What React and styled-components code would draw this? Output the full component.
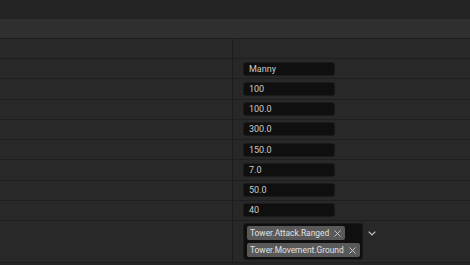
import React from "react";
import styled, { createGlobalStyle } from "styled-components";

const GlobalStyle = createGlobalStyle`
  html, body {
    margin: 0;
    padding: 0;
    background: #242424;
    font-family: Roboto, "Liberation Sans", Arial, sans-serif;
  }
`;

const Page = styled.div`
  width: 470px;
  height: 265px;
  overflow: hidden;
  background: #242424;
`;

const TopBar = styled.div`
  height: 19px;
  background: #242424;
`;

const Band = styled.div`
  height: 19px;
  background: #2f2f2f;
  border-bottom: 1px solid #1f1f1f;
`;

const Row = styled.div`
  display: grid;
  grid-template-columns: 232px 1px 1fr;
  box-sizing: border-box;
  height: ${(p) => p.$h}px;
  background: #282828;
  border-bottom: 1px solid #1e1e1e;
`;

const Divider = styled.div`
  background: #1c1c1c;
`;

const NameCell = styled.div``;

const ValueCell = styled.div`
  display: flex;
  align-items: center;
  padding-left: 10px;
  gap: 5px;
`;

const Input = styled.div`
  box-sizing: border-box;
  width: 92px;
  height: 14px;
  background: #0f0f0f;
  border: 1px solid #1a1a1a;
  border-radius: 3px;
  color: #cacaca;
  font-size: 9px;
  line-height: 12px;
  padding-left: 5px;
`;

const TagBox = styled.div`
  box-sizing: border-box;
  width: 120px;
  background: #0f0f0f;
  border: 1px solid #1a1a1a;
  border-radius: 3px;
  padding: 2px 3px;
  display: flex;
  flex-direction: column;
  align-items: flex-start;
  gap: 3px;
`;

const Tag = styled.div`
  display: flex;
  align-items: center;
  gap: 5px;
  height: 14px;
  padding: 0 4px 0 3px;
  background: #595959;
  border-radius: 2px;
  color: #e2e2e2;
  font-size: 8.4px;
  white-space: nowrap;
`;

const Chevron = styled.svg`
  align-self: flex-start;
  margin-top: 10px;
`;

const Close = () => (
  <svg width="7" height="7" viewBox="0 0 7 7">
    <path d="M0.5 0.5L6.5 6.5M6.5 0.5L0.5 6.5" stroke="#d0d0d0" strokeWidth="0.9" />
  </svg>
);

const values = ["Manny", "100", "100.0", "300.0", "150.0", "7.0", "50.0", "40"];
const tags = ["Tower.Attack.Ranged", "Tower.Movement.Ground"];

export default function App() {
  return (
    <Page>
      <GlobalStyle />
      <TopBar />
      <Band />
      <Row $h={20}>
        <NameCell />
        <Divider />
        <ValueCell />
      </Row>
      {values.map((v) => (
        <Row key={v} $h={20.25}>
          <NameCell />
          <Divider />
          <ValueCell>
            <Input>{v}</Input>
          </ValueCell>
        </Row>
      ))}
      <Row $h={42}>
        <NameCell />
        <Divider />
        <ValueCell>
          <TagBox>
            {tags.map((t) => (
              <Tag key={t}>
                {t}
                <Close />
              </Tag>
            ))}
          </TagBox>
          <Chevron width="8" height="5" viewBox="0 0 8 5">
            <path d="M0.7 0.7L4 4L7.3 0.7" fill="none" stroke="#c8c8c8" strokeWidth="1.2" />
          </Chevron>
        </ValueCell>
      </Row>
    </Page>
  );
}
